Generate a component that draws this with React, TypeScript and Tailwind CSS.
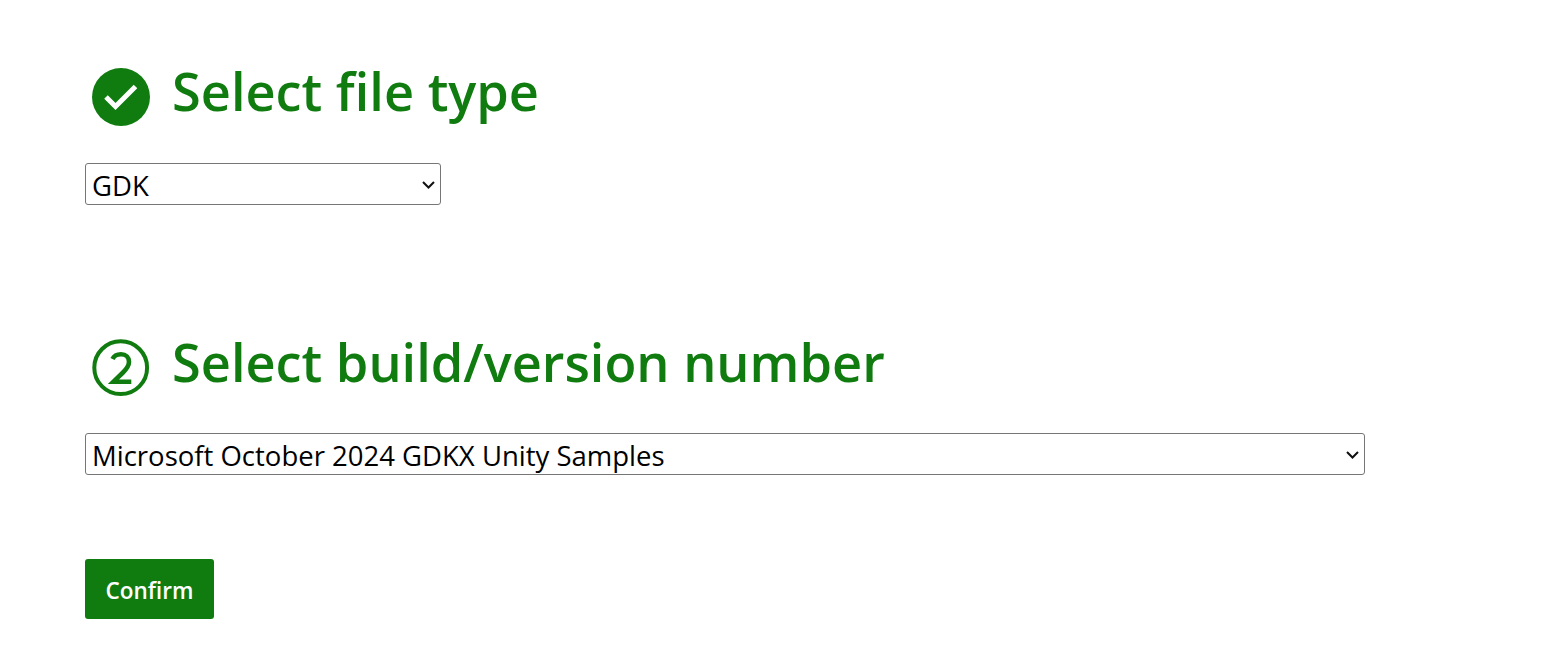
const font = "[font-family:'Open_Sans','Noto_Sans',sans-serif]";

function CheckIcon() {
  return (
    <svg width="58" height="58" viewBox="0 0 58 58" className="shrink-0">
      <circle cx="29" cy="29" r="29" fill="#107c10" />
      <path d="M14 29 L23.5 38.5 L43.5 18.5" fill="none" stroke="#fff" strokeWidth="5" />
    </svg>
  );
}

function NumberIcon() {
  return (
    <svg width="58" height="58" viewBox="0 0 58 58" className="shrink-0">
      <circle cx="28.7" cy="28.7" r="26.4" fill="none" stroke="#107c10" strokeWidth="4" />
      <path
        d="M20.5 20 C22 16.8 25.3 15.3 29 15.3 C34 15.3 37 18.2 37 22.8 C37 27 34.8 29.8 31 33.5 L21.5 42.7 L39.3 42.7"
        fill="none"
        stroke="#107c10"
        strokeWidth="4.6"
      />
    </svg>
  );
}

function StepHeading({ icon, title }: { icon: React.ReactNode; title: string }) {
  return (
    <h2 className="flex items-start gap-[22px] pl-[7px] h-[58px]">
      {icon}
      <span className="text-[52.3px] leading-[45px] font-semibold text-[#107c10] whitespace-nowrap">{title}</span>
    </h2>
  );
}

function Dropdown({ value, width }: { value: string; width: string }) {
  return (
    <div className={`relative ${width}`}>
      <select
        defaultValue={value}
        className="block w-full h-[42px] pl-[6px] pt-[1px] text-[27.5px] text-black appearance-none border border-[#767676] rounded-[3px] bg-white"
      >
        <option>{value}</option>
      </select>
      <svg width="13" height="8" viewBox="0 0 13 8" className="absolute right-[6px] top-[18px] pointer-events-none">
        <path d="M1 1 L6.5 6.5 L12 1" fill="none" stroke="#111" strokeWidth="2" />
      </svg>
    </div>
  );
}

export default function App() {
  return (
    <div className={`${font} min-h-[667px] bg-white pl-[85px] pt-[68px]`}>
      <StepHeading icon={<CheckIcon />} title="Select file type" />
      <div className="mt-[37px]">
        <Dropdown value="GDK" width="w-[356px]" />
      </div>

      <div className="mt-[134px]">
        <StepHeading icon={<NumberIcon />} title="Select build/version number" />
      </div>
      <div className="mt-[36px]">
        <Dropdown value="Microsoft October 2024 GDKX Unity Samples" width="w-[1280px]" />
      </div>

      <button className="mt-[84px] block w-[129px] h-[60px] pt-[3px] rounded-[3px] bg-[#107c10] text-white text-[22.5px] font-semibold">
        Confirm
      </button>
    </div>
  );
}
